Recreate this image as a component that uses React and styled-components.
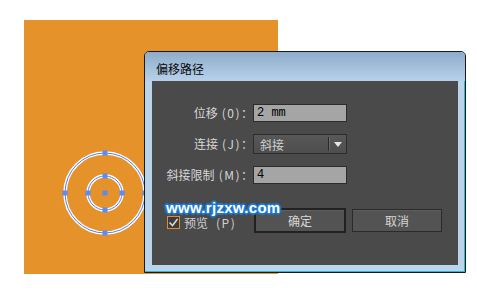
import React from 'react';
import styled, { createGlobalStyle } from 'styled-components';

const GlobalStyle = createGlobalStyle`
  html, body {
    margin: 0;
    padding: 0;
    background: #ffffff;
  }
  body {
    font-family: "Noto Sans CJK SC", "Noto Sans", sans-serif;
  }
`;

const Page = styled.div`
  position: relative;
  width: 477px;
  height: 296px;
  padding: 20px 0 0 24px;
  box-sizing: border-box;
  overflow: hidden;
`;

const Canvas = styled.div`
  width: 254px;
  height: 254px;
  background: #e6922a;
`;

const Dialog = styled.div`
  position: absolute;
  left: 144px;
  top: 51px;
  width: 322px;
  height: 222px;
  box-sizing: border-box;
  border: 1px solid #1a1a1a;
  border-radius: 5px 5px 0 0;
  background: #bad4ec;
  box-shadow: inset -1px -1px 0 #2bb6d4;
  display: flex;
  flex-direction: column;
`;

const TitleBar = styled.div`
  height: 29px;
  flex: none;
  display: flex;
  align-items: center;
  padding: 4px 0 0 11px;
  box-sizing: border-box;
  border-radius: 4px 4px 0 0;
  background: linear-gradient(#8eacca, #b7d1ea);
  color: #0a0a0a;
  font-size: 12px;
`;

const Panel = styled.div`
  margin: 0 7px 7px 7px;
  flex: 1;
  background: #4a4a4a;
  padding: 23px 0 0 0;
  box-sizing: border-box;
`;

const Form = styled.div`
  display: grid;
  grid-template-columns: 101px 94px;
  grid-template-rows: 18px 20px 18px;
  row-gap: 12px;
  align-items: center;
`;

const Label = styled.div`
  text-align: right;
  color: #d6d6d6;
  font-size: 12px;
  white-space: nowrap;
  line-height: 18px;
`;

const Key = styled.span`
  margin-left: 4px;
  letter-spacing: 1.5px;
`;

const Input = styled.div`
  height: 18px;
  box-sizing: border-box;
  border: 1px solid #2c2c2c;
  background: #a5a5a5;
  color: #000;
  font-family: "Liberation Mono", "DejaVu Sans Mono", monospace;
  font-size: 12px;
  line-height: 16px;
  padding-left: 3px;
`;

const Select = styled.div`
  height: 20px;
  box-sizing: border-box;
  border: 1px solid #2c2c2c;
  background: linear-gradient(#585858, #4e4e4e);
  display: flex;
  align-items: center;
  color: #d0d0d0;
  font-size: 12px;
`;

const SelectText = styled.span`
  flex: 1;
  padding-left: 6px;
`;

const SelectDivider = styled.span`
  width: 1px;
  height: 14px;
  background: #2a2a2a;
  border-right: 1px solid #6a6a6a;
`;

const Arrow = styled.span`
  width: 16px;
  display: flex;
  justify-content: center;
  &::after {
    content: '';
    border-left: 4px solid transparent;
    border-right: 4px solid transparent;
    border-top: 5px solid #e6e6e6;
  }
`;

const BottomRow = styled.div`
  display: flex;
  align-items: center;
  margin-top: 24px;
  padding-left: 15px;
`;

const Preview = styled.label`
  width: 87px;
  display: flex;
  align-items: center;
  gap: 4px;
  color: #cfcfcf;
  font-size: 12px;
  margin-top: 4px;
`;

const CheckBox = styled.span`
  width: 13px;
  height: 13px;
  box-sizing: border-box;
  border: 1px solid #e88a2a;
  background: #3c3c3c;
  display: flex;
  align-items: center;
  justify-content: center;
`;

const Buttons = styled.div`
  display: flex;
  gap: 6px;
`;

const Button = styled.div`
  width: ${(p) => (p.$primary ? '92px' : '90px')};
  height: ${(p) => (p.$primary ? '25px' : '23px')};
  margin-top: ${(p) => (p.$primary ? '0' : '1px')};
  box-sizing: border-box;
  border: ${(p) => (p.$primary ? '2px solid #222' : '1px solid #2a2a2a')};
  background: #535353;
  box-shadow: inset 0 1px 0 #5e5e5e;
  color: #d6d6d6;
  font-size: 12px;
  display: flex;
  align-items: center;
  justify-content: center;
`;

const Watermark = styled.div`
  position: absolute;
  left: 166px;
  top: 199px;
  font-family: "Liberation Sans", Arial, sans-serif;
  font-weight: bold;
  font-size: 15px;
  letter-spacing: 0.3px;
  color: #ffffff;
  text-shadow:
    1px 0 0 #1b7ad6, -1px 0 0 #1b7ad6, 0 1px 0 #1b7ad6, 0 -1px 0 #1b7ad6,
    1px 1px 0 #1b7ad6, -1px -1px 0 #1b7ad6, 1px -1px 0 #1b7ad6, -1px 1px 0 #1b7ad6,
    2px 0 1px #1b7ad6, -2px 0 1px #1b7ad6, 0 2px 1px #1b7ad6, 0 -2px 1px #1b7ad6;
`;

const Ring = ({ r }) => (
  <>
    <circle cx="81" cy="173" r={r} fill="none" stroke="#ffffff" strokeWidth="3.5" />
    <circle cx="81" cy="173" r={r} fill="none" stroke="#4f82f0" strokeWidth="1" />
    {[
      [0, -r],
      [r, 0],
      [0, r],
      [-r, 0],
    ].map(([dx, dy]) => (
      <rect key={`${dx}-${dy}`} x={81 + dx - 2.5} y={173 + dy - 2.5} width="5" height="5" fill="#5a8cf8" />
    ))}
  </>
);

const Circles = () => (
  <svg width="254" height="254" viewBox="0 0 254 254">
    <Ring r={40} />
    <Ring r={17} />
    <rect x="78.5" y="170.5" width="5" height="5" fill="#5a8cf8" />
  </svg>
);

export default function App() {
  return (
    <>
      <GlobalStyle />
      <Page>
        <Canvas>
          <Circles />
        </Canvas>
        <Dialog>
          <TitleBar>偏移路径</TitleBar>
          <Panel>
            <Form>
              <Label>位移<Key>(0)</Key>：</Label>
              <Input>2 mm</Input>
              <Label>连接<Key>(J)</Key>：</Label>
              <Select>
                <SelectText>斜接</SelectText>
                <SelectDivider />
                <Arrow />
              </Select>
              <Label>斜接限制<Key>(M)</Key>：</Label>
              <Input>4</Input>
            </Form>
            <BottomRow>
              <Preview>
                <CheckBox>
                  <svg width="11" height="11" viewBox="0 0 11 11">
                    <path d="M1.5 5.5 L4.5 8.5 L9.5 2" fill="none" stroke="#d8d8d8" strokeWidth="1.6" />
                  </svg>
                </CheckBox>
                预览<Key>(P)</Key>
              </Preview>
              <Buttons>
                <Button $primary>确定</Button>
                <Button>取消</Button>
              </Buttons>
            </BottomRow>
          </Panel>
        </Dialog>
        <Watermark>www.rjzxw.com</Watermark>
      </Page>
    </>
  );
}
